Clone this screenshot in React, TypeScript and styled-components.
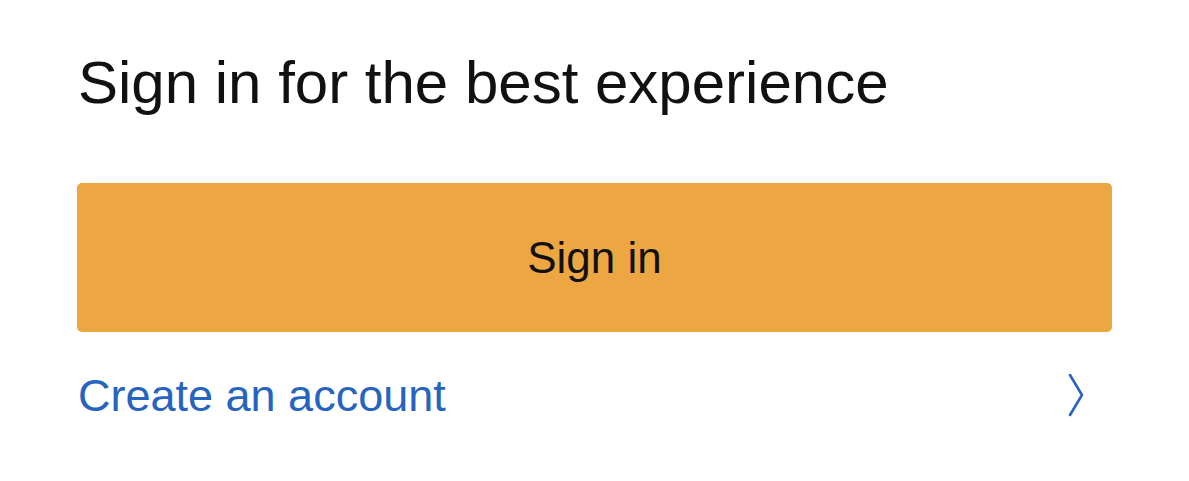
import React from 'react';
import styled, { createGlobalStyle } from 'styled-components';

const GlobalStyle = createGlobalStyle`
  body {
    margin: 0;
    background: #ffffff;
    font-family: "Liberation Sans", Arial, sans-serif;
  }
`;

const Panel = styled.div`
  display: flex;
  flex-direction: column;
  padding: 48px 77px 0 77px;
`;

const Title = styled.h1`
  margin: 0 0 0 1px;
  font-size: 60px;
  line-height: 69px;
  font-weight: 400;
  color: #111111;
`;

const SignInButton = styled.button`
  margin-top: 66px;
  height: 149px;
  width: 100%;
  border: none;
  border-radius: 5px;
  background: #eca742;
  color: #111111;
  font-family: "Liberation Sans", Arial, sans-serif;
  font-size: 44px;
  cursor: pointer;
`;

const CreateRow = styled.a`
  display: flex;
  align-items: center;
  justify-content: space-between;
  margin-top: 38px;
  padding: 0 28px 0 1px;
  color: #2764c0;
  font-size: 45px;
  text-decoration: none;
  cursor: pointer;
`;

const Chevron = () => (
  <svg width="16" height="44" viewBox="0 0 16 44" fill="none">
    <path d="M2 1 L14 21 L2 41" stroke="#2764c0" strokeWidth="2.6" strokeLinecap="round" strokeLinejoin="miter" />
  </svg>
);

const App: React.FC = () => {
  const onCreate = (event: React.MouseEvent<HTMLAnchorElement>) => {
    event.preventDefault();
  };
  return (
    <>
      <GlobalStyle />
      <Panel>
        <Title>Sign in for the best experience</Title>
        <SignInButton>Sign in</SignInButton>
        <CreateRow href="/register" onClick={onCreate}>
          <span>Create an account</span>
          <Chevron />
        </CreateRow>
      </Panel>
    </>
  );
};

export default App;
